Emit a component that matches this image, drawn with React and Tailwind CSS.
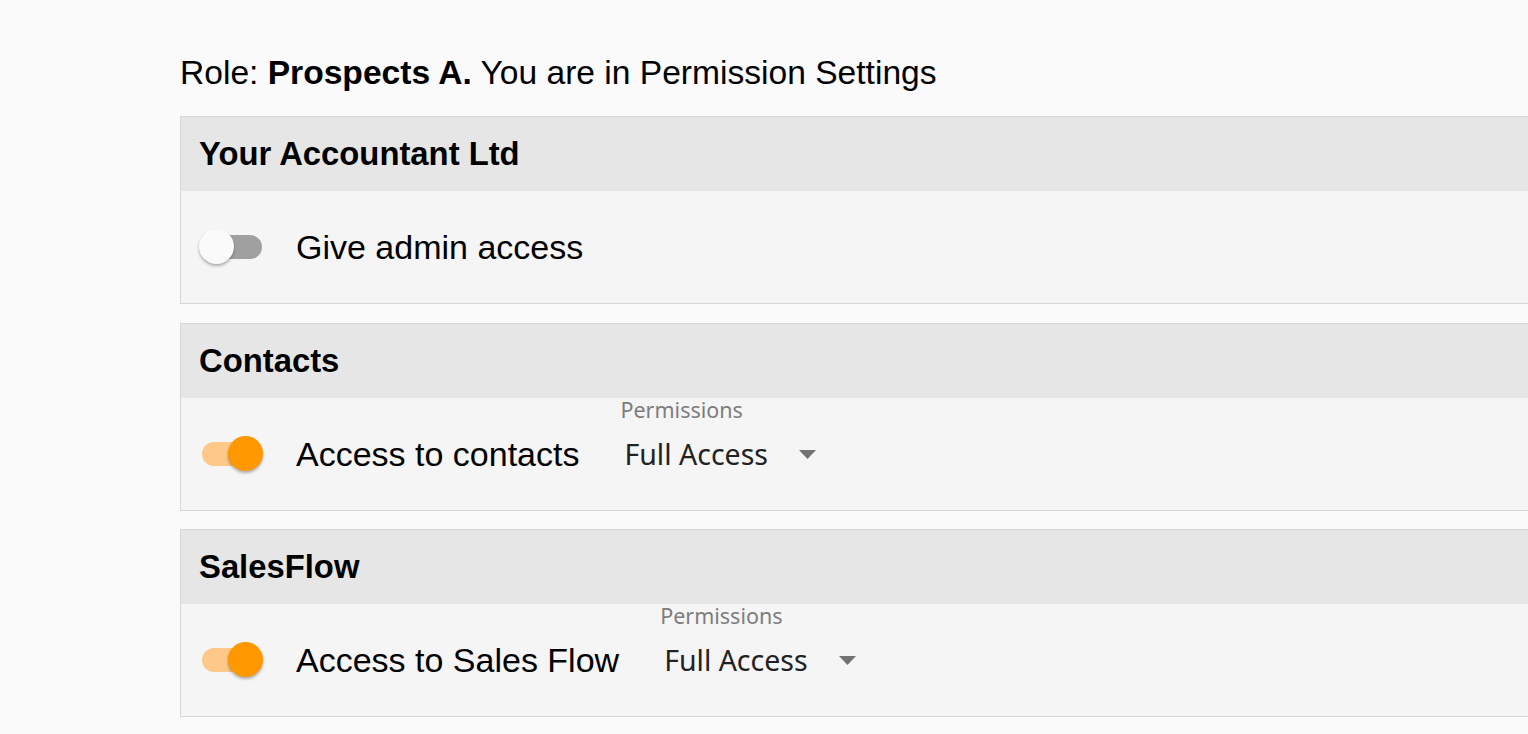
import React from 'react';

const sections = [
  { title: 'Your Accountant Ltd', label: 'Give admin access', checked: false },
  { title: 'Contacts', label: 'Access to contacts', checked: true, select: 'Full Access' },
  { title: 'SalesFlow', label: 'Access to Sales Flow', checked: true, select: 'Full Access' },
];

function Toggle({ checked }) {
  return (
    <div className="relative w-[66px] h-[36px] shrink-0">
      <div
        className={
          checked
            ? 'absolute left-[3px] top-[6px] w-[60px] h-[24px] rounded-full bg-[#fdc888]'
            : 'absolute left-[3px] top-[6px] w-[60px] h-[24px] rounded-full bg-[#a0a0a0]'
        }
      />
      <div
        className={
          checked
            ? 'absolute left-[29px] top-0 w-[35px] h-[35px] rounded-full bg-[#ff9800] shadow-[0_2px_3px_rgba(0,0,0,0.3)]'
            : 'absolute left-0 top-0 w-[35px] h-[35px] rounded-full bg-[#fafafa] shadow-[0_2px_3px_rgba(0,0,0,0.3)]'
        }
      />
    </div>
  );
}

function PermissionSelect({ value }) {
  return (
    <div className="flex flex-col pb-[39px] ml-[41px] font-['Noto_Sans',sans-serif]">
      <span className="text-[21.5px] leading-[24px] text-[#7d7d7d] mb-[15px]">Permissions</span>
      <div className="flex items-center h-[34px] pl-[4px]">
        <span className="text-[28.5px] leading-[34px] text-[#222]">{value}</span>
        <svg className="ml-[31px] mt-[1px]" width="17" height="9" viewBox="0 0 17 9">
          <path d="M0 0 L17 0 L8.5 9 Z" fill="#737373" />
        </svg>
      </div>
    </div>
  );
}

export default function App() {
  return (
    <div className="min-h-screen bg-[#fafafa] overflow-hidden font-['Liberation_Sans',Arial,sans-serif] text-black">
      <div className="ml-[180px] w-[1400px] pt-[55px]">
        <h1 className="text-[33.6px] leading-[36px] mb-[25px]">
          Role: <span className="font-bold">Prospects A.</span> You are in Permission Settings
        </h1>
        <div className="flex flex-col gap-[18.5px]">
          {sections.map((s) => (
            <div key={s.title} className="border border-[#d6d6d6]">
              <div className="h-[74px] bg-[#e6e6e6] flex items-center pl-[18px]">
                <h2 className="text-[32.8px] leading-[36px] font-bold">{s.title}</h2>
              </div>
              <div className="h-[112px] bg-[#f5f5f5] flex items-center pl-[18px]">
                <Toggle checked={s.checked} />
                <span className="ml-[31px] text-[34px] leading-[40px]">{s.label}</span>
                {s.select && <PermissionSelect value={s.select} />}
              </div>
            </div>
          ))}
        </div>
      </div>
    </div>
  );
}
